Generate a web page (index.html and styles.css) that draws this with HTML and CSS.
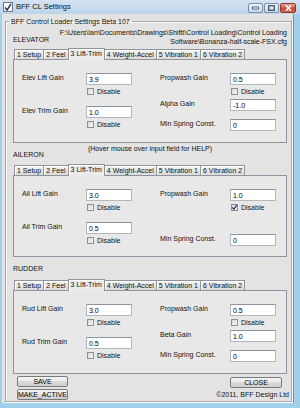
FILE: index.html
```html
<!DOCTYPE html>
<html lang="en">
<head>
    <meta charset="UTF-8">
    <meta name="viewport" content="width=device-width, initial-scale=1.0">
    <title>BFF CL Settings</title>
    <link rel="stylesheet" href="styles.css">
</head>
<body>
    <div class="window">
        <div class="titlebar">
            <svg class="app-icon" width="10" height="10" viewBox="0 0 10 10">
                <rect x="0.5" y="0.5" width="9" height="9" fill="#fff" stroke="#6d7a8c"/>
                <path d="M2 5.5 L4 8 L8 2" fill="none" stroke="#1d2f6b" stroke-width="1.4"/>
            </svg>
            <span class="title">BFF CL Settings</span>
            <div class="caption-buttons">
                <span class="cap">
                    <svg width="7" height="4" viewBox="0 0 7 4"><rect x="0.5" y="1" width="6" height="2" fill="#fff" stroke="#3b4a5e" stroke-width="0.8"/></svg>
                </span>
                <span class="cap">
                    <svg width="7" height="6" viewBox="0 0 7 6"><rect x="0.7" y="0.7" width="5.6" height="4.6" fill="none" stroke="#3b4a5e" stroke-width="1.2"/></svg>
                </span>
                <span class="cap close">
                    <svg width="7" height="6" viewBox="0 0 7 6"><path d="M1 0.5 L6 5.5 M6 0.5 L1 5.5" stroke="#fff" stroke-width="1.6"/></svg>
                </span>
            </div>
        </div>

        <div class="client">
            <fieldset class="main-group">
                <legend>BFF Control Loader Settings Beta 107</legend>

                <!-- ELEVATOR -->
                <div class="head">
                    <div class="axis-title">ELEVATOR</div>
                    <div class="cfg-path">F:\Users\Ian\Documents\Drawings\Shiftt\Control Loading\Control Loading<br>Software\Bonanza-half-scale-FSX.cfg</div>
                </div>
                <div class="tabs">
                    <span class="tab">1 Setup</span>
                    <span class="tab">2 Feel</span>
                    <span class="tab on">3 Lift-Trim</span>
                    <span class="tab">4 Weight-Accel</span>
                    <span class="tab">5 Vibration 1</span>
                    <span class="tab">6 Vibration 2</span>
                </div>
                <div class="panel">
                    <div class="col">
                        <div class="field"><label>Elev Lift Gain</label><input type="text" value="3.9"></div>
                        <div class="check"><span class="box"></span>Disable</div>
                        <div class="field second"><label>Elev Trim Gain</label><input type="text" value="1.0"></div>
                        <div class="check"><span class="box"></span>Disable</div>
                    </div>
                    <div class="col right">
                        <div class="field"><label>Propwash Gain</label><input type="text" value="0.5"></div>
                        <div class="check"><span class="box"></span>Disable</div>
                        <div class="field mid"><label>Alpha Gain</label><input type="text" value="-1.0"></div>
                        <div class="field spring"><label>Min Spring Const.</label><input type="text" value="0"></div>
                    </div>
                </div>

                <!-- AILERON -->
                <div class="head hint-row">
                    <div class="axis-title">AILERON</div>
                    <div class="hint">(Hover mouse over input field for HELP)</div>
                </div>
                <div class="tabs tabs-2">
                    <span class="tab">1 Setup</span>
                    <span class="tab">2 Feel</span>
                    <span class="tab on">3 Lift-Trim</span>
                    <span class="tab">4 Weight-Accel</span>
                    <span class="tab">5 Vibration 1</span>
                    <span class="tab">6 Vibration 2</span>
                </div>
                <div class="panel short">
                    <div class="col">
                        <div class="field"><label>Ail Lift Gain</label><input type="text" value="3.0"></div>
                        <div class="check"><span class="box"></span>Disable</div>
                        <div class="field second"><label>Ail Trim Gain</label><input type="text" value="0.5"></div>
                        <div class="check"><span class="box"></span>Disable</div>
                    </div>
                    <div class="col right">
                        <div class="field"><label>Propwash Gain</label><input type="text" value="1.0"></div>
                        <div class="check"><span class="box on"><svg width="7" height="7" viewBox="0 0 7 7"><path d="M1.3 3.4 L2.9 5.2 L5.8 1.2" fill="none" stroke="#253c7c" stroke-width="1.3"/></svg></span>Disable</div>
                        <div class="field spring-far"><label>Min Spring Const.</label><input type="text" value="0"></div>
                    </div>
                </div>

                <!-- RUDDER -->
                <div class="head rudder-head">
                    <div class="axis-title">RUDDER</div>
                </div>
                <div class="tabs tabs-3">
                    <span class="tab">1 Setup</span>
                    <span class="tab">2 Feel</span>
                    <span class="tab on">3 Lift-Trim</span>
                    <span class="tab">4 Weight-Accel</span>
                    <span class="tab">5 Vibration 1</span>
                    <span class="tab">6 Vibration 2</span>
                </div>
                <div class="panel">
                    <div class="col">
                        <div class="field"><label>Rud Lift Gain</label><input type="text" value="3.0"></div>
                        <div class="check"><span class="box"></span>Disable</div>
                        <div class="field second"><label>Rud Trim Gain</label><input type="text" value="0.5"></div>
                        <div class="check"><span class="box"></span>Disable</div>
                    </div>
                    <div class="col right">
                        <div class="field"><label>Propwash Gain</label><input type="text" value="0.5"></div>
                        <div class="check"><span class="box"></span>Disable</div>
                        <div class="field mid"><label>Beta Gain</label><input type="text" value="1.0"></div>
                        <div class="field spring"><label>Min Spring Const.</label><input type="text" value="0"></div>
                    </div>
                </div>

                <div class="footer">
                    <div class="footer-left">
                        <button class="btn">SAVE</button>
                        <button class="btn">MAKE_ACTIVE</button>
                    </div>
                    <div class="footer-right">
                        <button class="btn close-btn">CLOSE</button>
                        <div class="copyright">&copy;2011, BFF Design Ltd</div>
                    </div>
                </div>
            </fieldset>
        </div>
    </div>
</body>
</html>
```

FILE: styles.css
```css
body {
    margin: 0;
    font-family: "Liberation Sans", Arial, sans-serif;
    font-size: 7px;
    color: #111;
}

.window {
    width: 300px;
    height: 408px;
    display: flex;
    flex-direction: column;
    background: #9fd2ea;
}

/* title bar */
.titlebar {
    height: 14px;
    flex: 0 0 14px;
    display: flex;
    align-items: flex-start;
    padding: 0 4px 0 3px;
    background: linear-gradient(#d4e3f3, #bdd3ea);
}
.app-icon {
    margin-top: 2px;
}
.title {
    margin-left: 3px;
    line-height: 14px;
    font-size: 7.5px;
}
.caption-buttons {
    margin-left: auto;
    margin-top: 3px;
    display: flex;
    gap: 1px;
}
.cap {
    width: 15px;
    height: 10px;
    box-sizing: border-box;
    border: 1px solid #7d8ea6;
    border-radius: 2px;
    background: linear-gradient(#eef3fa, #c6d6ea);
    display: flex;
    align-items: center;
    justify-content: center;
}
.cap.close {
    width: 16px;
    border-color: #8a3a2d;
    background: linear-gradient(#eaa595, #c9462f 60%, #d8684f);
}

/* client area */
.client {
    flex: 1;
    margin: 0 6px 5px 2px;
    background: #e3e3e3;
    display: flex;
    flex-direction: column;
    border-right: 1px solid #4f9fc3;
}

.main-group {
    margin: 3px 1px 1px 3px;
    padding: 0 4px 1px 7px;
    border: 1px solid #a6a6a6;
    box-shadow: inset 1px 1px 0 #fff, 1px 1px 0 #fff;
    min-width: 0;
}
.main-group legend {
    padding: 0 2px;
    margin-left: -4px;
    line-height: 9px;
}

.head {
    display: flex;
    justify-content: space-between;
    align-items: flex-end;
    margin-top: 2px;
}
.axis-title {
    line-height: 9px;
    margin-bottom: 2px;
}
.cfg-path {
    text-align: right;
    line-height: 9px;
}

.hint-row {
    display: grid;
    grid-template-columns: 1fr auto 1fr;
    height: 16px;
    margin-top: 0;
}
.hint-row .axis-title {
    align-self: end;
    margin-bottom: 0;
}
.hint {
    align-self: start;
    margin-top: 1px;
    line-height: 9px;
}
.rudder-head {
    margin-top: 7px;
}
.rudder-head .axis-title {
    margin-bottom: 0;
}

/* tabs */
.tabs {
    display: flex;
    align-items: flex-end;
    height: 11px;
    margin-top: 2px;
    padding-left: 1px;
    position: relative;
    z-index: 1;
}
.tabs-2 {
    margin-top: 5px;
}
.tabs-3 {
    margin-top: 6px;
}
.tab {
    height: 10px;
    box-sizing: border-box;
    padding: 0 2px;
    border: 1px solid #8f939a;
    border-bottom: none;
    border-right: none;
    line-height: 9px;
    background: linear-gradient(#f4f4f4, #dadada);
    box-shadow: inset 1px 1px 0 #fff;
}
.tab:last-child {
    border-right: 1px solid #8f939a;
}
.tab.on {
    height: 12px;
    margin-bottom: -1px;
    border-right: 1px solid #8f939a;
    background: #ebebeb;
    line-height: 10px;
}
.tab.on + .tab {
    border-left: none;
}

/* tab page */
.panel {
    height: 84px;
    box-sizing: border-box;
    border: 1px solid #8f939a;
    background: #e8e8e8;
    display: grid;
    grid-template-columns: 110px 1fr;
    column-gap: 28px;
    padding: 0 8px;
}
.panel.short {
    height: 82px;
}
.col {
    display: flex;
    flex-direction: column;
    padding-top: 13px;
}
.field {
    display: flex;
    align-items: flex-start;
}
.field label {
    width: 64px;
    line-height: 9px;
}
.right .field label {
    width: 70px;
}
.field input {
    width: 46px;
    height: 12px;
    box-sizing: border-box;
    margin: 0;
    padding: 0 2px;
    border: 1px solid #b4b7bd;
    border-top-color: #8f949c;
    background: #fff;
    font: inherit;
    color: #000;
}
.field.second {
    margin-top: 10px;
}
.field.mid {
    margin-top: 3px;
}
.field.spring {
    margin-top: 8px;
}
.field.spring-far {
    margin-top: 22px;
}

.check {
    display: flex;
    align-items: center;
    gap: 3px;
    height: 10px;
    margin-top: 1px;
    padding-left: 65px;
}
.right .check {
    padding-left: 71px;
}
.box {
    width: 7px;
    height: 7px;
    box-sizing: border-box;
    border: 1px solid #8e8f8f;
    background: linear-gradient(135deg, #d9d9d9, #f7f7f7);
    position: relative;
}
.box svg {
    position: absolute;
    left: -1px;
    top: -1px;
}

/* bottom buttons */
.footer {
    display: flex;
    justify-content: space-between;
    margin-top: 2px;
}
.footer-left {
    display: flex;
    flex-direction: column;
    gap: 2px;
    margin-left: 4px;
}
.footer-right {
    display: flex;
    flex-direction: column;
    align-items: flex-end;
    margin-top: 1px;
}
.btn {
    width: 51px;
    height: 11px;
    padding: 0;
    border: 1px solid #7a7a7a;
    border-radius: 2px;
    background: linear-gradient(#f4f4f4 0, #ebebeb 45%, #dcdcdc 50%, #cfcfcf 100%);
    font: inherit;
    line-height: 9px;
    color: #000;
}
.close-btn {
    width: 52px;
    margin-right: 5px;
}
.copyright {
    margin-top: 2px;
    margin-right: -2px;
    line-height: 9px;
}
```
